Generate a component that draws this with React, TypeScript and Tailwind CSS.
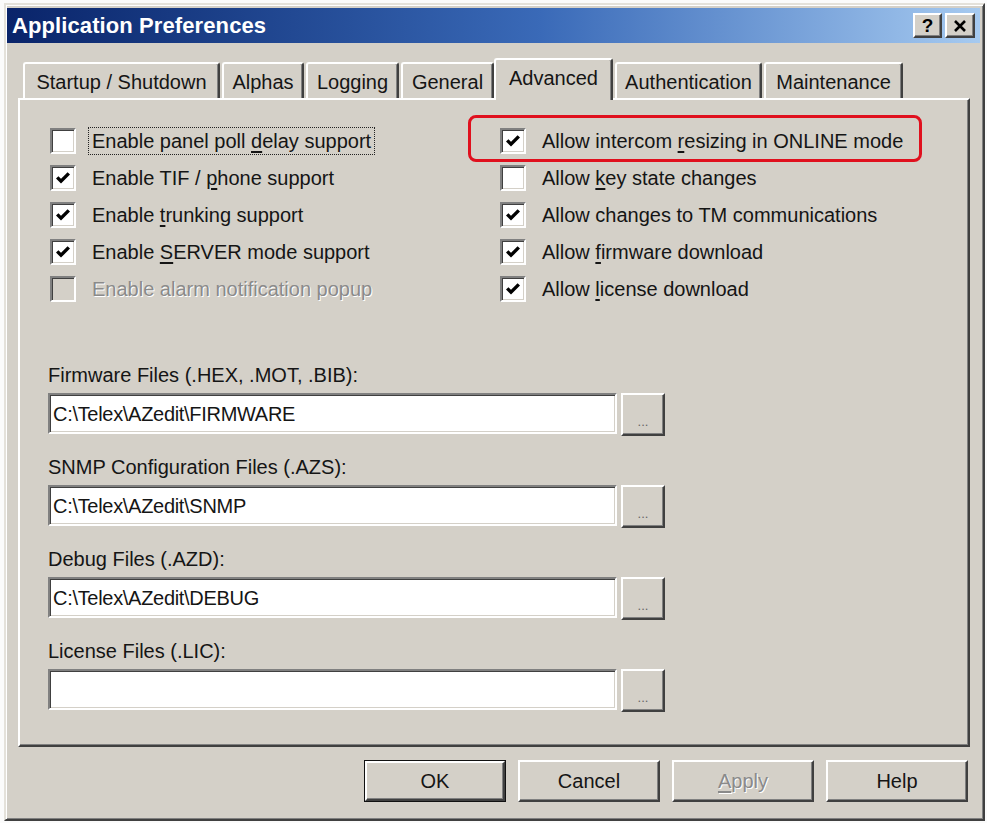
import type { ReactNode } from "react";

// Classic 3D bevels, drawn 2px wide to suit the large dialog scale.
const raised =
  "border-2 border-t-white border-l-white border-r-[#404040] border-b-[#404040] shadow-[inset_-1px_-1px_0_#808080]";
const sunken =
  "border-2 border-t-[#808080] border-l-[#808080] border-r-white border-b-white shadow-[inset_1px_1px_0_#404040,inset_-1px_-1px_0_#d4d0c8]";
const disabledText = "text-[#8a8a8a] [text-shadow:1px_1px_0_#ffffff]";

type Tab = { label: string; w: number; gap: number; active?: boolean };

const tabs: Tab[] = [
  { label: "Startup / Shutdown", w: 197, gap: 0 },
  { label: "Alphas", w: 82, gap: 2 },
  { label: "Logging", w: 93, gap: 2 },
  { label: "General", w: 93, gap: 2 },
  { label: "Advanced", w: 119, gap: 0, active: true },
  { label: "Authentication", w: 147, gap: 2 },
  { label: "Maintenance", w: 139, gap: 2 },
];

type Option = { label: ReactNode; checked: boolean; disabled?: boolean; focused?: boolean };

const u = (c: string) => <span className="underline underline-offset-[3px]">{c}</span>;

const leftOptions: Option[] = [
  { label: <>Enable panel poll {u("d")}elay support</>, checked: false, focused: true },
  { label: <>Enable TIF / {u("p")}hone support</>, checked: true },
  { label: <>Enable {u("t")}runking support</>, checked: true },
  { label: <>Enable {u("S")}ERVER mode support</>, checked: true },
  { label: <>Enable alarm notification popup</>, checked: false, disabled: true },
];

const rightOptions: Option[] = [
  { label: <>Allow intercom {u("r")}esizing in ONLINE mode</>, checked: true },
  { label: <>Allow {u("k")}ey state changes</>, checked: false },
  { label: <>Allow changes to TM communications</>, checked: true },
  { label: <>Allow {u("f")}irmware download</>, checked: true },
  { label: <>Allow {u("l")}icense download</>, checked: true },
];

const paths = [
  { label: "Firmware Files (.HEX, .MOT, .BIB):", value: "C:\\Telex\\AZedit\\FIRMWARE" },
  { label: "SNMP Configuration Files (.AZS):", value: "C:\\Telex\\AZedit\\SNMP" },
  { label: "Debug Files (.AZD):", value: "C:\\Telex\\AZedit\\DEBUG" },
  { label: "License Files (.LIC):", value: "" },
];

function CheckMark() {
  return (
    <svg width="14" height="14" viewBox="0 0 7 7">
      <path d="M0.6 3.2 L2.5 5.1 L6.4 1.2" fill="none" stroke="#000" strokeWidth="1.7" />
    </svg>
  );
}

function CheckRow({ opt, highlight }: { opt: Option; highlight?: boolean }) {
  return (
    <div className="relative flex h-[37px] items-center">
      {highlight && (
        <div className="pointer-events-none absolute left-[-32px] top-[-7px] h-[47px] w-[454px] rounded-[8px] border-[3px] border-[#e0101e]" />
      )}
      <div
        className={`flex h-[26px] w-[26px] shrink-0 items-center justify-center ${sunken} ${
          opt.disabled ? "bg-[#d4d0c8]" : "bg-white"
        }`}
      >
        {opt.checked && <CheckMark />}
      </div>
      <div className="ml-[13px]">
        <span
          className={`inline-block px-[3px] leading-[26px] ${
            opt.focused ? "outline-1 outline-dotted outline-[#222]" : "outline-0"
          } ${opt.disabled ? disabledText : ""}`}
        >
          {opt.label}
        </span>
      </div>
    </div>
  );
}

function PathField({ label, value }: { label: string; value: string }) {
  return (
    <div className="flex flex-col">
      <div className="h-[22px] leading-[22px]">{label}</div>
      <div className="mt-[7px] flex items-start gap-[4px]">
        <div className={`flex h-[41px] w-[569px] items-center bg-white pl-[3px] ${sunken}`}>
          <span className="tracking-[-0.3px]">{value}</span>
        </div>
        <button
          className={`flex h-[43px] w-[44px] items-end justify-center bg-[#d4d0c8] pb-[6px] text-[13px] leading-none text-[#666] ${raised}`}
        >
          ...
        </button>
      </div>
    </div>
  );
}

function DialogButton({ label, isDefault, disabled }: { label: ReactNode; isDefault?: boolean; disabled?: boolean }) {
  const face = (
    <div
      className={`flex h-full w-full items-center justify-center bg-[#d4d0c8] ${raised} ${
        disabled ? disabledText : ""
      }`}
    >
      {label}
    </div>
  );
  return (
    <div className={`h-[42px] w-[142px] ${isDefault ? "border border-[#111]" : ""}`}>{face}</div>
  );
}

function TitleBar() {
  return (
    <div className="flex h-[35px] shrink-0 items-center justify-between bg-linear-to-r from-[#0a246a] via-[#3a6ab8] via-55% to-[#a6caf0] pl-[5px] pr-[5px]">
      <span className="text-[22px] font-bold tracking-[0.1px] text-white">Application Preferences</span>
      <div className="flex gap-[3px]">
        <div
          className={`flex h-[25px] w-[29px] items-center justify-center bg-[#d4d0c8] text-[19px] font-bold leading-none text-black ${raised}`}
        >
          ?
        </div>
        <div className={`flex h-[25px] w-[30px] items-center justify-center bg-[#d4d0c8] ${raised}`}>
          <svg width="14" height="12" viewBox="0 0 14 12">
            <path d="M2 1 L12 11 M12 1 L2 11" stroke="#000" strokeWidth="2.6" />
          </svg>
        </div>
      </div>
    </div>
  );
}

export default function App() {
  return (
    <div className="min-h-screen bg-[#fbfbfb] pl-[4px] pt-[3px] font-['Liberation_Sans',Arial,sans-serif] text-[20px] text-[#151515]">
      <div className="flex h-[818px] w-[981px] flex-col border-2 border-t-[#e4e1da] border-l-[#e4e1da] border-r-[#404040] border-b-[#404040] bg-[#d4d0c8] pb-px pl-px pr-[3px] pt-[3px] shadow-[inset_1px_1px_0_#ffffff,inset_-1px_-1px_0_#808080]">
        <TitleBar />

        {/* Tab strip */}
        <div className="relative z-10 -mb-[2px] ml-[16px] mt-[15px] flex h-[42px] items-end">
          {tabs.map((t) =>
            t.active ? (
              <div
                key={t.label}
                style={{ width: t.w, marginLeft: t.gap }}
                className="flex h-[42px] items-center justify-center rounded-t-[3px] border-l-2 border-r-2 border-t-2 border-l-white border-r-[#404040] border-t-white bg-[#d4d0c8] pb-[4px] shadow-[inset_-1px_0_0_#808080]"
              >
                {t.label}
              </div>
            ) : (
              <div
                key={t.label}
                style={{ width: t.w, marginLeft: t.gap }}
                className="mb-[2px] flex h-[36px] items-center justify-center rounded-t-[3px] border-l-2 border-r-2 border-t-2 border-l-white border-r-[#404040] border-t-white bg-[#d4d0c8] pt-[2px] shadow-[inset_-1px_0_0_#808080]"
              >
                {t.label}
              </div>
            ),
          )}
        </div>

        {/* Tab page */}
        <div className="ml-[11px] flex h-[649px] w-[952px] flex-col border-2 border-t-white border-l-white border-r-[#404040] border-b-[#404040] pl-[28px] shadow-[inset_-1px_-1px_0_#808080]">
          <div className="mt-[22px] grid grid-cols-[450px_1fr] pl-[2px]">
            <div className="flex flex-col">
              {leftOptions.map((o, i) => (
                <CheckRow key={i} opt={o} />
              ))}
            </div>
            <div className="flex flex-col">
              {rightOptions.map((o, i) => (
                <CheckRow key={i} opt={o} highlight={i === 0} />
              ))}
            </div>
          </div>

          <div className="mt-[57px] flex flex-col gap-[20px]">
            {paths.map((p) => (
              <PathField key={p.label} label={p.label} value={p.value} />
            ))}
          </div>
        </div>

        {/* Dialog buttons */}
        <div className="mt-[13px] flex justify-end gap-[12px] pr-[12px]">
          <DialogButton label="OK" isDefault />
          <DialogButton label="Cancel" />
          <DialogButton label={<>{u("A")}pply</>} disabled />
          <DialogButton label="Help" />
        </div>
      </div>
    </div>
  );
}
